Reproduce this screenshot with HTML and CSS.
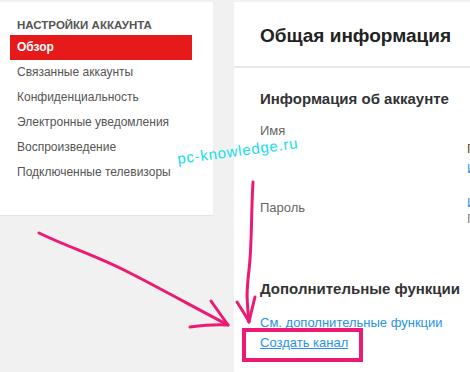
FILE: index.html
```html
<!DOCTYPE html>
<html lang="ru">
<head>
<meta charset="utf-8">
<title>Настройки аккаунта</title>
<link rel="stylesheet" href="styles.css">
</head>
<body>
<div class="page">
  <nav class="sidebar">
    <div class="side-title">НАСТРОЙКИ АККАУНТА</div>
    <a class="side-item active">Обзор</a>
    <a class="side-item">Связанные аккаунты</a>
    <a class="side-item">Конфиденциальность</a>
    <a class="side-item">Электронные уведомления</a>
    <a class="side-item">Воспроизведение</a>
    <a class="side-item">Подключенные телевизоры</a>
  </nav>
  <main class="main">
    <header class="main-head"><h1>Общая информация</h1></header>
    <section class="main-body">
      <h2>Информация об аккаунте</h2>
      <div class="row row-name">
        <div class="label">Имя</div>
        <div class="value"><div class="v-dark">Пользователь</div><div class="v-link">Изменить</div></div>
      </div>
      <div class="row row-pass">
        <div class="label">Пароль</div>
        <div class="value"><div class="v-link">Изменить</div><div class="v-grey">Последнее изменение</div></div>
      </div>
      <h2 class="extra">Дополнительные функции</h2>
      <a class="link">См. дополнительные функции</a>
      <a class="link underline">Создать канал</a>
    </section>
  </main>
</div>
<svg class="overlay" width="470" height="372" viewBox="0 0 470 372">
  <text x="178" y="164" transform="rotate(-7.5 178 164)" class="wm" textLength="121">pc-knowledge.ru</text>
  <g class="ink">
    <path d="M39 233 C 70 248, 95 255, 130 273 S 190 305, 228 325"/>
    <path d="M190 327 C 205 325, 215 324, 228 325 L 211 301"/>
    <path d="M253 182 C 251 215, 252 245, 249 270 S 247 300, 249 322"/>
    <path d="M237 302 C 242 310, 246 316, 249 322 C 251 313, 253 305, 255 297"/>
  </g>
  <rect x="244" y="330" width="117" height="30" class="box"/>
</svg>
</body>
</html>
```

FILE: styles.css
```css
html, body {
  margin: 0;
  padding: 0;
}
body {
  width: 470px;
  height: 372px;
  overflow: hidden;
  background: #f1f1f1;
  font-family: "Liberation Sans", Arial, sans-serif;
  position: relative;
}
.page {
  display: flex;
  align-items: flex-start;
  gap: 21px;
  padding-top: 2px;
  width: 760px;
}
.sidebar {
  width: 213px;
  flex: none;
  background: #fff;
  box-sizing: border-box;
  padding: 15px 21px 30px 10px;
  display: flex;
  flex-direction: column;
  box-shadow: 0 1px 1px rgba(0,0,0,0.05);
}
.side-title {
  font-size: 11.5px;
  font-weight: bold;
  color: #555;
  line-height: 16px;
  padding-left: 7px;
  margin-bottom: 2px;
}
.side-item {
  display: block;
  font-size: 12px;
  line-height: 25px;
  height: 25px;
  color: #555;
  padding-left: 7px;
}
.side-item.active {
  background: #e61a1a;
  color: #fff;
  font-weight: bold;
}
.main {
  width: 500px;
  flex: none;
  background: #fff;
  height: 400px;
}
.main-head {
  height: 66px;
  border-bottom: 2px solid #e9e9e9;
  display: flex;
  align-items: center;
  padding: 3px 0 0 26px;
  box-sizing: border-box;
}
.main-head h1 {
  margin: 0;
  font-size: 19px;
  font-weight: bold;
  color: #222;
  line-height: 24px;
}
.main-body {
  padding: 21px 0 0 26px;
  display: flex;
  flex-direction: column;
  align-items: flex-start;
}
.main-body h2 {
  margin: 0;
  font-size: 15px;
  font-weight: bold;
  color: #333;
  line-height: 20px;
}
.row {
  display: grid;
  grid-template-columns: 207px auto;
  font-size: 13px;
  line-height: 18px;
}
.row-name {
  margin-top: 13px;
  height: 77px;
}
.row-pass {
  height: 80px;
}
.label {
  color: #666;
}
.value {
  font-size: 13px;
  line-height: 18px;
}
.row-name .value {
  padding-top: 17px;
  line-height: 20px;
}
.row-pass .value {
  margin-top: -4px;
  line-height: 16px;
}
.v-dark { color: #6b4a1e; }
.v-link { color: #2793e6; }
.v-grey { color: #888; }
.link {
  display: block;
  font-size: 13px;
  line-height: 20px;
  color: #2793e6;
}
.main-body h2.extra + .link {
  margin-top: 14px;
}
.link.underline {
  text-decoration: underline;
}
.overlay {
  position: absolute;
  left: 0;
  top: 0;
  pointer-events: none;
}
.wm {
  font-family: "Liberation Sans", Arial, sans-serif;
  font-size: 15px;
  fill: #14dcee;
}
.ink path {
  fill: none;
  stroke: #ec1a73;
  stroke-width: 3;
  stroke-linecap: round;
  stroke-linejoin: round;
}
.box {
  fill: none;
  stroke: #ec1a73;
  stroke-width: 4;
}
```
